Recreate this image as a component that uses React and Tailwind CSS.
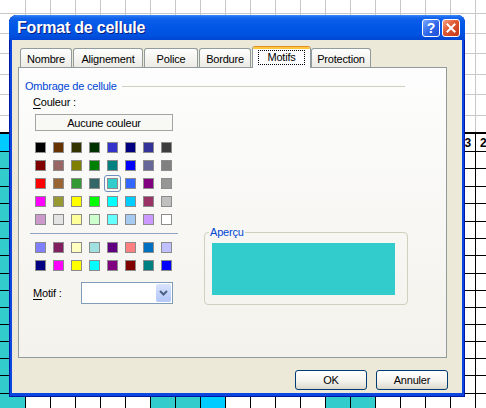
import React from 'react';

const grayH = ['h-[14px]', 'h-[20px]', 'h-[20px]', 'h-[21px]', 'h-[20px]', 'h-[21px]'];
const blackH = [
  'h-[18px]', 'h-[17px]', 'h-[18px]', 'h-[17px]', 'h-[18px]', 'h-[17px]', 'h-[17px]', 'h-[18px]',
  'h-[17px]', 'h-[17px]', 'h-[17px]', 'h-[17px]', 'h-[17px]', 'h-[17px]', 'h-[18px]', 'h-[20px]',
];
const COLS = Array.from({ length: 20 }, (_, i) => i);

function fillFor(r, c) {
  if (c === 0) return r === 0 ? 'bg-[#00ccff]' : 'bg-[#33cccc]';
  if (r === 15) {
    if (c === 6 || c === 7 || c === 13 || c === 14) return 'bg-[#33cccc]';
    if (c === 8) return 'bg-[#00ccff]';
  }
  return 'bg-white';
}

const mainPalette = [
  ['bg-[#000000]', 'bg-[#663300]', 'bg-[#333300]', 'bg-[#003300]', 'bg-[#3333cc]', 'bg-[#000080]', 'bg-[#333399]', 'bg-[#3d3d3d]'],
  ['bg-[#800000]', 'bg-[#996666]', 'bg-[#808000]', 'bg-[#008000]', 'bg-[#008080]', 'bg-[#0000ff]', 'bg-[#666699]', 'bg-[#808080]'],
  ['bg-[#ff0000]', 'bg-[#996633]', 'bg-[#339933]', 'bg-[#336666]', 'bg-[#33cccc]', 'bg-[#3366ff]', 'bg-[#800080]', 'bg-[#969696]'],
  ['bg-[#ff00ff]', 'bg-[#999933]', 'bg-[#ffff00]', 'bg-[#00ff00]', 'bg-[#00ffff]', 'bg-[#00ccff]', 'bg-[#993366]', 'bg-[#c0c0c0]'],
  ['bg-[#cc99cc]', 'bg-[#e3e3e3]', 'bg-[#ffff99]', 'bg-[#ccffcc]', 'bg-[#66ffff]', 'bg-[#a6caf0]', 'bg-[#cc99ff]', 'bg-[#ffffff]'],
];
const chartPalette = [
  ['bg-[#8080ff]', 'bg-[#802060]', 'bg-[#ffffc0]', 'bg-[#a0e0e0]', 'bg-[#600080]', 'bg-[#ff8080]', 'bg-[#0070c0]', 'bg-[#c0c0ff]'],
  ['bg-[#000080]', 'bg-[#ff00ff]', 'bg-[#ffff00]', 'bg-[#00ffff]', 'bg-[#800080]', 'bg-[#800000]', 'bg-[#008080]', 'bg-[#0000ff]'],
];

function SwatchGrid({ rows, selected }) {
  return (
    <div className="grid grid-cols-[repeat(8,17px)] gap-[1px]">
      {rows.map((row, r) =>
        row.map((cls, c) => {
          const isSel = selected && selected[0] === r && selected[1] === c;
          return (
            <div
              key={`${r}-${c}`}
              className={
                isSel
                  ? 'flex h-[17px] w-[17px] items-center justify-center rounded-[3px] border border-[#6f8fbf]'
                  : 'flex h-[17px] w-[17px] items-center justify-center'
              }
            >
              <div className={`h-[11px] w-[11px] border border-[#8c8c8c] ${cls}`} />
            </div>
          );
        })
      )}
    </div>
  );
}

function Tab({ label, width, selected }) {
  if (selected) {
    return (
      <div className={`relative z-10 mb-[-1px] ml-[1px] flex h-[22px] flex-none flex-col items-center rounded-t-[3px] border border-b-0 border-[#919b9c] border-t-[#e68b2c] bg-[#fcfcfe] ${width}`}>
        <div className="h-[2px] w-full rounded-t-[2px] bg-[#ffc73c]" />
        <span className="mt-[1px] border border-dotted border-black px-[8px] leading-[13px]">{label}</span>
      </div>
    );
  }
  return (
    <div className={`flex h-[19px] flex-none items-center justify-center rounded-t-[3px] border border-b-0 border-[#919b9c] bg-gradient-to-b from-[#fefefe] to-[#ecebe5] pt-[1px] ${width}`}>
      {label}
    </div>
  );
}

export default function App() {
  return (
    <div className="relative h-[408px] w-[486px] overflow-hidden bg-white font-['Liberation_Sans',Arial,sans-serif] text-[11px] leading-[14px] tracking-[-0.2px] text-black">
      {/* spreadsheet behind */}
      <div className="flex flex-col">
        {grayH.map((h, r) => (
          <div key={`g${r}`} className={`flex flex-none border-b border-[#c8c8c8] ${h}`}>
            {COLS.map((c) => (
              <div key={c} className={`h-full flex-none border-r border-[#c8c8c8] ${c === 0 ? 'w-[26px]' : 'w-[25px]'}`} />
            ))}
          </div>
        ))}
        <div className="flex h-[18px] flex-none border-b-2 border-black">
          {COLS.map((c) => (
            <div key={c} className={`h-full flex-none border-r border-[#c8c8c8] ${c === 0 ? 'w-[26px]' : 'w-[25px]'}`} />
          ))}
        </div>
        {blackH.map((h, r) => (
          <div key={`b${r}`} className={`flex flex-none border-b border-black ${h}`}>
            {COLS.map((c) => (
              <div
                key={c}
                className={`flex h-full flex-none items-center border-r border-black text-[12px] font-bold ${c === 0 ? 'w-[26px]' : 'w-[25px]'} ${c === 18 ? 'justify-end pr-[4px]' : 'pl-[4px]'} ${fillFor(r, c)}`}
              >
                {r === 0 && c === 18 ? '3' : null}
                {r === 0 && c === 19 ? '2' : null}
              </div>
            ))}
          </div>
        ))}
      </div>

      {/* dialog window */}
      <div className="absolute left-[9px] top-[15px] flex h-[382px] w-[456px] flex-col rounded-t-[8px] bg-[#0b47de] shadow-[inset_1px_0_#0019a3,inset_-1px_0_#0019a3,inset_0_-1px_#0019a3]">
        <div className="flex h-[25px] flex-none items-center rounded-t-[8px] bg-[linear-gradient(to_bottom,#3d8ef7_0px,#1a6af0_2px,#0a5de9_5px,#0056e6_13px,#0052e0_20px,#0044d2_25px)] pl-[8px] pr-[5px]">
          <span className="flex-1 pt-[1px] text-[16px] font-bold tracking-[-0.2px] text-white [text-shadow:1px_1px_0_#0a1a7e]">
            Format de cellule
          </span>
          <div className="flex gap-[2px] pt-[1px]">
            <div className="flex h-[18px] w-[18px] items-center justify-center rounded-[3px] border border-white bg-[linear-gradient(135deg,#7aa8fa,#2f66ea_55%,#1c4fd4)] text-[14px] font-bold leading-none text-white">
              ?
            </div>
            <div className="flex h-[18px] w-[18px] items-center justify-center rounded-[3px] border border-white bg-[linear-gradient(135deg,#f4a488,#e0562f_45%,#c2371b)]">
              <svg width="10" height="10" viewBox="0 0 10 10">
                <path d="M1.5 1.5 L8.5 8.5 M8.5 1.5 L1.5 8.5" stroke="white" strokeWidth="2" strokeLinecap="square" />
              </svg>
            </div>
          </div>
        </div>

        <div className="mx-[3px] mb-[4px] flex flex-1 flex-col bg-[#ece9d8] pl-[6px] pt-[6px]">
          {/* tabs */}
          <div className="flex h-[21px] flex-none items-end pl-[2px]">
            <Tab label="Nombre" width="w-[52px]" />
            <div className="ml-[1px] flex items-end"><Tab label="Alignement" width="w-[70px]" /></div>
            <div className="ml-[1px] flex items-end"><Tab label="Police" width="w-[54px]" /></div>
            <div className="ml-[1px] flex items-end"><Tab label="Bordure" width="w-[52px]" /></div>
            <Tab label="Motifs" width="w-[59px]" selected />
            <Tab label="Protection" width="w-[60px]" />
          </div>

          {/* panel */}
          <div className="flex h-[291px] w-[429px] flex-none flex-col border border-[#919b9c] bg-gradient-to-b from-[#fdfdfd] to-[#f3f2ec]">
            <div className="mt-[11px] flex h-[14px] items-center pl-[6px]">
              <span className="text-[#0046d5]">Ombrage de cellule</span>
              <div className="ml-[5px] mr-[41px] h-px flex-1 bg-[#d0d0bf]" />
            </div>

            <div className="mt-[2px] flex">
              <div className="flex w-[185px] flex-none flex-col">
                <div className="ml-[14px] h-[14px]">
                  <span className="underline underline-offset-[2px]">C</span>ouleur :
                </div>
                <div className="ml-[16px] mt-[5px] flex h-[17px] w-[138px] items-center justify-center border border-[#a5a5a0] bg-[#f8f8f5]">
                  Aucune couleur
                </div>
                <div className="ml-[13px] mt-[8px]">
                  <SwatchGrid rows={mainPalette} selected={[2, 4]} />
                </div>
                <div className="ml-[11px] mt-[5px] h-px w-[148px] bg-[#8ea3c2]" />
                <div className="ml-[13px] mt-[5px]">
                  <SwatchGrid rows={chartPalette} />
                </div>
                <div className="mt-[8px] flex h-[22px] items-center">
                  <div className="ml-[14px] w-[48px] flex-none">
                    <span className="underline underline-offset-[2px]">M</span>otif :
                  </div>
                  <div className="flex h-[22px] w-[92px] flex-none justify-end border border-[#7f9db9] bg-white p-[1px]">
                    <div className="flex h-full w-[15px] items-center justify-center rounded-[2px] bg-[linear-gradient(to_bottom,#dae4fc,#c3d3fb_50%,#b4c7f7)]">
                      <svg width="9" height="6" viewBox="0 0 9 6">
                        <path d="M1 1 L4.5 4.5 L8 1" fill="none" stroke="#4d6185" strokeWidth="2" />
                      </svg>
                    </div>
                  </div>
                </div>
              </div>

              <fieldset className="mt-[130px] w-[204px] flex-none rounded-[4px] border border-[#d0d0bf] pb-[9px] pl-[7px] pr-0 pt-0">
                <legend className="ml-[-3px] px-[1px] leading-[14px] text-[#0046d5]">Aperçu</legend>
                <div className="mt-[4px] h-[52px] w-[183px] bg-[#33cccc]" />
              </fieldset>
            </div>
          </div>

          {/* buttons */}
          <div className="mt-[12px] flex justify-end gap-[9px] pr-[14px]">
            <div className="flex h-[20px] w-[72px] items-center justify-center rounded-[3px] border border-[#003c74] bg-[linear-gradient(to_bottom,#ffffff,#f4f3ee_55%,#dcd8cc)]">
              OK
            </div>
            <div className="flex h-[20px] w-[72px] items-center justify-center rounded-[3px] border border-[#003c74] bg-[linear-gradient(to_bottom,#ffffff,#f4f3ee_55%,#dcd8cc)]">
              Annuler
            </div>
          </div>
        </div>
      </div>
    </div>
  );
}
